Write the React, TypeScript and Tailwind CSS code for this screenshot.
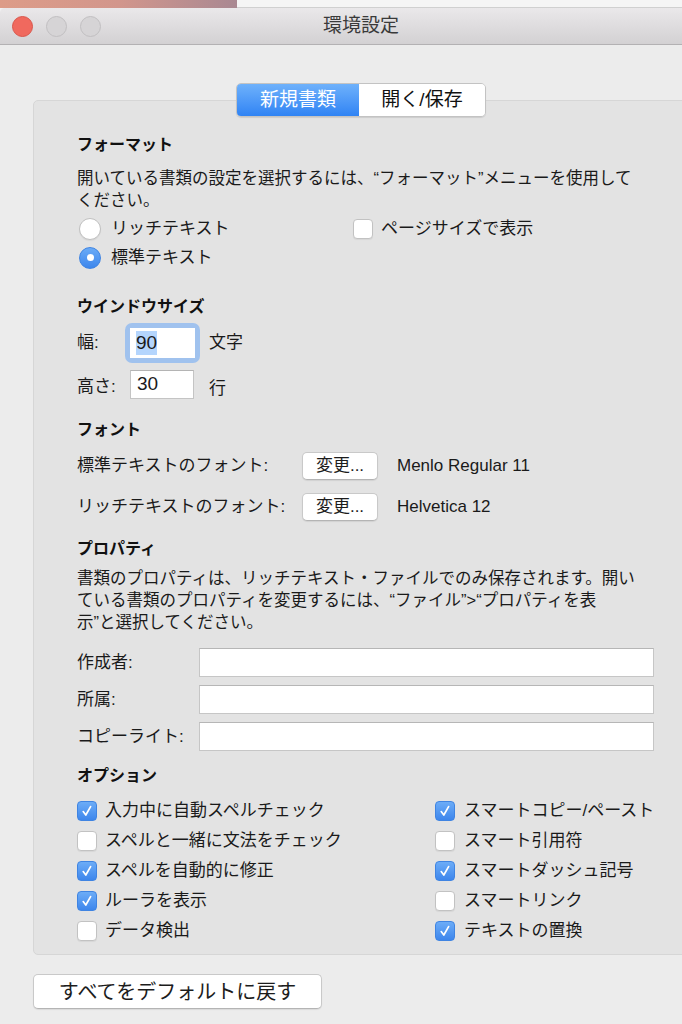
import React from "react";

const FONT = "font-['Liberation_Sans','Noto_Sans_CJK_JP',sans-serif]";

function CheckBox({ on }: { on: boolean }) {
  if (on) {
    return (
      <span className="w-[20px] h-[20px] rounded-[4px] bg-linear-to-b from-[#6cacf7] to-[#3d86ec] border border-[#3f84e2] flex items-center justify-center shrink-0">
        <svg width="14" height="14" viewBox="0 0 14 14" fill="none">
          <path d="M3.2 7.6 L5.8 11 L10.6 2.6" stroke="white" strokeWidth="1.7" strokeLinecap="round" strokeLinejoin="round" />
        </svg>
      </span>
    );
  }
  return <span className="w-[20px] h-[20px] rounded-[4px] bg-white border border-[#c2c2c2] shadow-[0_1px_1px_rgba(0,0,0,0.06)] shrink-0" />;
}

function Radio({ on }: { on: boolean }) {
  if (on) {
    return (
      <span className="w-[22px] h-[22px] rounded-full bg-linear-to-b from-[#6aabf7] to-[#3c86ec] border border-[#3f84e2] flex items-center justify-center shrink-0">
        <span className="w-[7px] h-[7px] rounded-full bg-white" />
      </span>
    );
  }
  return <span className="w-[22px] h-[22px] rounded-full bg-white border border-[#c0c0c0] shadow-[0_1px_1px_rgba(0,0,0,0.06)] shrink-0" />;
}

function MacButton({ children, className }: { children: React.ReactNode; className?: string }) {
  return (
    <div className={`bg-white border border-[#c9c9c9] border-b-[#b4b4b4] rounded-[5px] shadow-[0_1px_1px_rgba(0,0,0,0.08)] flex items-center justify-center text-[#1c1c1c] whitespace-nowrap ${className ?? ""}`}>
      {children}
    </div>
  );
}

function Heading({ children }: { children: React.ReactNode }) {
  return <div className="h-[22px] leading-[22px] text-[16px] font-bold text-[#111]">{children}</div>;
}

const leftOptions: [string, boolean][] = [
  ["入力中に自動スペルチェック", true],
  ["スペルと一緒に文法をチェック", false],
  ["スペルを自動的に修正", true],
  ["ルーラを表示", true],
  ["データ検出", false],
];

const rightOptions: [string, boolean][] = [
  ["スマートコピー/ペースト", true],
  ["スマート引用符", false],
  ["スマートダッシュ記号", true],
  ["スマートリンク", false],
  ["テキストの置換", true],
];

export default function App() {
  return (
    <div className={`w-[682px] h-[1024px] overflow-hidden bg-[#f2f2f2] ${FONT}`}>
      {/* desktop behind the window */}
      <div className="h-[8px] flex">
        <div className="w-[237px] bg-linear-to-r from-[#dd9c88] via-[#d2968c] to-[#a98892]" />
        <div className="flex-1 bg-[#f5f5f5] border-b border-[#d0d0d0]" />
      </div>

      <div className="w-[722px] bg-[#ececec] rounded-t-[5px] overflow-hidden">
        {/* title bar */}
        <div className="h-[37px] relative flex items-center bg-linear-to-b from-[#eae8ea] to-[#d3d1d3] border-b border-[#b3b1b3]">
          <div className="flex items-center gap-[13px] pl-[12px]">
            <span className="w-[21px] h-[21px] rounded-full bg-[#f0695e] border border-[#d9564b]" />
            <span className="w-[21px] h-[21px] rounded-full bg-[#d6d4d6] border border-[#c1bfc1]" />
            <span className="w-[21px] h-[21px] rounded-full bg-[#d6d4d6] border border-[#c1bfc1]" />
          </div>
          <div className="absolute inset-0 flex items-center justify-center text-[19px] text-[#3a3a3a]">環境設定</div>
        </div>

        {/* body */}
        <div className="pt-[38px] px-[33px] pb-[20px]">
          <div className="relative z-10 mx-auto w-[250px] h-[34px] flex rounded-[5px] border border-[#c3c3c3] shadow-[0_1px_1px_rgba(0,0,0,0.1)] overflow-hidden text-[19px]">
            <div className="w-[122px] bg-linear-to-b from-[#6eb1fb] to-[#2f83f4] text-white flex items-center justify-center">新規書類</div>
            <div className="flex-1 bg-white text-[#111] flex items-center justify-center">開く/保存</div>
          </div>

          <div className="-mt-[17px] bg-[#e3e3e3] border border-[#d6d6d6] rounded-[5px] pt-[33px] pb-[8px] pl-[43px] pr-[34px] text-[#1a1a1a]">
            <Heading>フォーマット</Heading>
            <div className="mt-[11px] text-[16.5px] leading-[22px] whitespace-nowrap">
              <div>開いている書類の設定を選択するには、“フォーマット”メニューを使用して</div>
              <div>ください。</div>
            </div>
            <div className="mt-[3px] grid grid-cols-[276px_1fr] text-[17px] whitespace-nowrap">
              <div className="h-[29px] flex items-center gap-[10px] pl-[2px]">
                <Radio on={false} />
                <span>リッチテキスト</span>
              </div>
              <div className="h-[29px] flex items-center gap-[8px]">
                <CheckBox on={false} />
                <span>ページサイズで表示</span>
              </div>
              <div className="h-[29px] flex items-center gap-[10px] pl-[2px]">
                <Radio on={true} />
                <span>標準テキスト</span>
              </div>
            </div>

            <div className="mt-[24px]">
              <Heading>ウインドウサイズ</Heading>
            </div>
            <div className="mt-[4px] h-[41px] flex items-center text-[17px]">
              <span className="w-[48px]">幅:</span>
              <div className="p-[5px] rounded-[7px] bg-[#a0c2ee]">
                <div className="w-[65px] h-[30px] bg-white flex items-center pl-[6px]">
                  <span className="bg-[#b4d5fd] leading-[24px] text-[19px]">90</span>
                </div>
              </div>
              <span className="ml-[9px]">文字</span>
            </div>
            <div className="mt-[7px] h-[29px] flex items-center text-[17px]">
              <span className="w-[53px] pt-[4px]">高さ:</span>
              <div className="w-[64px] h-[29px] bg-white border border-[#c4c4c4] border-t-[#b4b4b4] flex items-center pl-[6px] text-[19px]">30</div>
              <span className="ml-[15px] pt-[8px]">行</span>
            </div>

            <div className="mt-[20px]">
              <Heading>フォント</Heading>
            </div>
            <div className="mt-[11px] h-[28px] flex items-center text-[17px] whitespace-nowrap">
              <span className="w-[225px]">標準テキストのフォント:</span>
              <MacButton className="w-[76px] h-[28px]">変更...</MacButton>
              <span className="ml-[19px]">Menlo Regular 11</span>
            </div>
            <div className="mt-[13px] h-[28px] flex items-center text-[17px] whitespace-nowrap">
              <span className="w-[225px]">リッチテキストのフォント:</span>
              <MacButton className="w-[76px] h-[28px]">変更...</MacButton>
              <span className="ml-[19px]">Helvetica 12</span>
            </div>

            <div className="mt-[17px]">
              <Heading>プロパティ</Heading>
            </div>
            <div className="mt-[7px] text-[16.5px] leading-[22px] whitespace-nowrap">
              <div>書類のプロパティは、リッチテキスト・ファイルでのみ保存されます。開い</div>
              <div>ている書類のプロパティを変更するには、“ファイル”&gt;“プロパティを表</div>
              <div>示”と選択してください。</div>
            </div>
            <div className="mt-[15px] flex flex-col gap-[8px] text-[17px]">
              {["作成者:", "所属:", "コピーライト:"].map((label) => (
                <div key={label} className="flex items-center">
                  <span className="w-[122px] whitespace-nowrap">{label}</span>
                  <div className="flex-1 h-[29px] bg-white border border-[#c6c6c6] border-t-[#b6b6b6]" />
                </div>
              ))}
            </div>

            <div className="mt-[14px]">
              <Heading>オプション</Heading>
            </div>
            <div className="mt-[9px] grid grid-cols-[358px_1fr] text-[17px] whitespace-nowrap">
              {leftOptions.map(([label, on], i) => (
                <React.Fragment key={label}>
                  <div className="h-[30px] flex items-center gap-[8px]">
                    <CheckBox on={on} />
                    <span>{label}</span>
                  </div>
                  <div className="h-[30px] flex items-center gap-[9px]">
                    <CheckBox on={rightOptions[i][1]} />
                    <span>{rightOptions[i][0]}</span>
                  </div>
                </React.Fragment>
              ))}
            </div>
          </div>

          <MacButton className="mt-[19px] w-[289px] h-[35px] text-[20px]">すべてをデフォルトに戻す</MacButton>
        </div>
      </div>
    </div>
  );
}
